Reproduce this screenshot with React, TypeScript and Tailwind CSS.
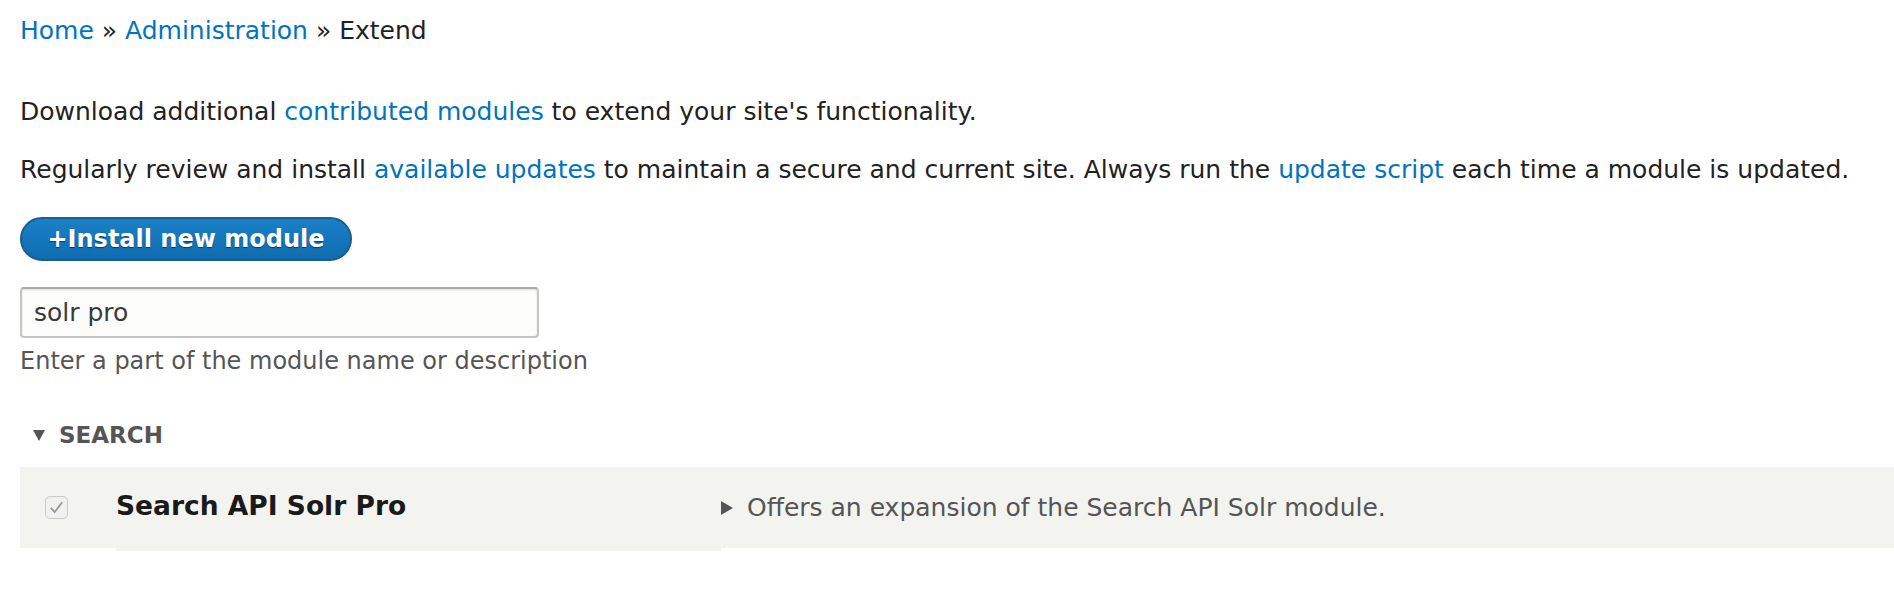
import React from "react";

const link = "text-[#0074bd]";

function Breadcrumb() {
  return (
    <nav className="h-[40px] leading-[40px] text-[25px] text-[#222]">
      <a className={link}>Home</a> » <a className={link}>Administration</a> » Extend
    </nav>
  );
}

function CheckIcon() {
  return (
    <svg viewBox="0 0 24 24" className="w-[17px] h-[17px]">
      <path d="M4 12.5 L9.5 18.5 L20 4.5" fill="none" stroke="#9b9b9b" strokeWidth="2.6" />
    </svg>
  );
}

function ModuleRow() {
  return (
    <div className="flex items-start">
      <div className="w-[96px] h-[81px] bg-[#f3f3ef] flex items-center">
        <span className="ml-[25px] w-[23px] h-[23px] rounded-[5px] border border-[#cacaca] bg-[#f1f1ef] flex items-center justify-center">
          <CheckIcon />
        </span>
      </div>
      <div className="w-[605px] h-[84px] bg-[#f3f3ef] pt-[19px]">
        <span className="text-[26.5px] font-bold text-[#1a1a1a] leading-[40px]">Search API Solr Pro</span>
      </div>
      <div className="flex-1 h-[81px] bg-[#f3f3ef] flex items-center gap-[14px] text-[25px] text-[#555]">
        <span className="w-0 h-0 border-y-[7px] border-y-transparent border-l-[12px] border-l-[#555]" />
        <span>Offers an expansion of the Search API Solr module.</span>
      </div>
    </div>
  );
}

export default function App() {
  return (
    <div className="min-h-[608px] bg-white pl-[20px] pt-[11px] font-['DejaVu_Sans',sans-serif] text-[#222]">
      <Breadcrumb />
      <p className="mt-[41px] text-[25px] leading-[40px]">
        Download additional <a className={link}>contributed modules</a> to extend your site's functionality.
      </p>
      <p className="mt-[18px] text-[25px] leading-[40px] whitespace-nowrap">
        Regularly review and install <a className={link}>available updates</a> to maintain a secure and current site. Always run the{" "}
        <a className={link}>update script</a> each time a module is updated.
      </p>
      <button className="mt-[27px] w-[332px] h-[44px] rounded-full border-2 border-[#1e5c90] bg-gradient-to-b from-[#1b80c8] to-[#0f6cb0] text-white text-[24px] font-bold [text-shadow:0_1px_1px_rgba(0,0,0,0.5)] flex items-center justify-center">
        +Install new module
      </button>
      <div className="mt-[26px] w-[519px] h-[51px] rounded-[4px] border-2 border-[#c4c4c4] border-t-[#a8a8a8] bg-[#fcfcfa] shadow-[inset_0_1px_2px_rgba(0,0,0,0.12)] flex items-center pl-[12px] text-[25px] text-[#3a3a3a]">
        solr pro
      </div>
      <div className="mt-[7px] text-[24px] leading-[32px] text-[#555]">Enter a part of the module name or description</div>
      <div className="mt-[42px] h-[32px] flex items-center gap-[14px] pl-[13px] text-[23px] font-bold text-[#555] uppercase">
        <span className="w-0 h-0 border-x-[6px] border-x-transparent border-t-[11px] border-t-[#555]" />
        <span>Search</span>
      </div>
      <div className="mt-[16px]">
        <ModuleRow />
      </div>
    </div>
  );
}
